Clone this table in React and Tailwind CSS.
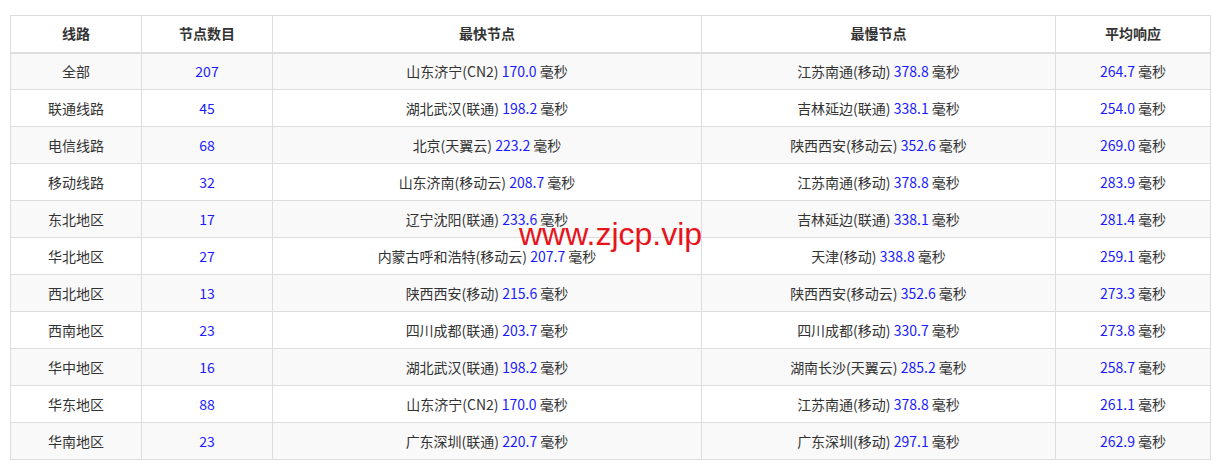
const ROWS = [
  ['全部', '207', ['山东济宁(CN2)', '170.0'], ['江苏南通(移动)', '378.8'], '264.7'],
  ['联通线路', '45', ['湖北武汉(联通)', '198.2'], ['吉林延边(联通)', '338.1'], '254.0'],
  ['电信线路', '68', ['北京(天翼云)', '223.2'], ['陕西西安(移动云)', '352.6'], '269.0'],
  ['移动线路', '32', ['山东济南(移动云)', '208.7'], ['江苏南通(移动)', '378.8'], '283.9'],
  ['东北地区', '17', ['辽宁沈阳(联通)', '233.6'], ['吉林延边(联通)', '338.1'], '281.4'],
  ['华北地区', '27', ['内蒙古呼和浩特(移动云)', '207.7'], ['天津(移动)', '338.8'], '259.1'],
  ['西北地区', '13', ['陕西西安(移动)', '215.6'], ['陕西西安(移动云)', '352.6'], '273.3'],
  ['西南地区', '23', ['四川成都(联通)', '203.7'], ['四川成都(移动)', '330.7'], '273.8'],
  ['华中地区', '16', ['湖北武汉(联通)', '198.2'], ['湖南长沙(天翼云)', '285.2'], '258.7'],
  ['华东地区', '88', ['山东济宁(CN2)', '170.0'], ['江苏南通(移动)', '378.8'], '261.1'],
  ['华南地区', '23', ['广东深圳(联通)', '220.7'], ['广东深圳(移动)', '297.1'], '262.9'],
];

function Ms({ v }) {
  return (
    <>
      <span className="text-[#1a1aff]">{v}</span> 毫秒
    </>
  );
}

export default function App() {
  const td = 'border border-[#dddddd] h-[37px] p-0 text-center align-middle';
  return (
    <div
      className="relative w-[1224px] h-[474px] bg-white pt-[15px] pl-[10px] text-[14px] text-[#333333]"
      style={{ fontFamily: '"Microsoft YaHei", "Noto Sans CJK SC", sans-serif' }}
    >
      <table className="w-[1200px] border-collapse table-fixed">
        <colgroup>
          <col className="w-[131px]" />
          <col className="w-[131px]" />
          <col className="w-[429px]" />
          <col className="w-[354px]" />
          <col className="w-[155px]" />
        </colgroup>
        <thead>
          <tr>
            {['线路', '节点数目', '最快节点', '最慢节点', '平均响应'].map((h) => (
              <th key={h} className={`${td} h-[37px] border-b-2 font-bold`}>{h}</th>
            ))}
          </tr>
        </thead>
        <tbody>
          {ROWS.map((r, i) => (
            <tr key={i} className={i % 2 === 0 ? 'bg-[#f9f9f9]' : 'bg-white'}>
              <td className={td}>{r[0]}</td>
              <td className={`${td} text-[#1a1aff]`}>{r[1]}</td>
              <td className={td}>{r[2][0]} <Ms v={r[2][1]} /></td>
              <td className={td}>{r[3][0]} <Ms v={r[3][1]} /></td>
              <td className={td}><Ms v={r[4]} /></td>
            </tr>
          ))}
        </tbody>
      </table>
      {/* watermark */}
      <div
        className="absolute left-[519px] top-[218px] text-[32px] leading-none text-[#e8141c]"
        style={{ fontFamily: 'Arial, "Liberation Sans", sans-serif' }}
      >
        www.zjcp.vip
      </div>
    </div>
  );
}
